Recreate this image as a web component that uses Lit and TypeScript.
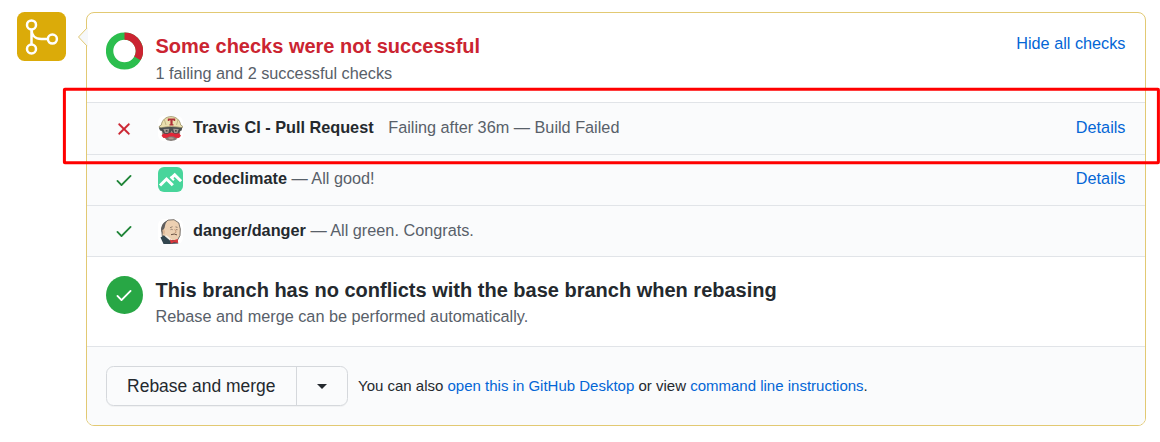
import { LitElement, html, css, svg } from "lit";
import { customElement } from "lit/decorators.js";

const check = svg`<path fill="currentColor" fill-rule="evenodd" d="M13.78 4.22a.75.75 0 010 1.06l-7.25 7.25a.75.75 0 01-1.06 0L2.22 9.28a.75.75 0 011.06-1.06L6 10.94l6.72-6.72a.75.75 0 011.06 0z"/>`;
const cross = svg`<path fill="currentColor" stroke="currentColor" stroke-width=".2" fill-rule="evenodd" d="M3.72 3.72a.75.75 0 011.06 0L8 6.94l3.22-3.22a.75.75 0 111.06 1.06L9.06 8l3.22 3.22a.75.75 0 11-1.06 1.06L8 9.06l-3.22 3.22a.75.75 0 01-1.06-1.06L6.94 8 3.72 4.78a.75.75 0 010-1.06z"/>`;

const travis = svg`
  <rect width="25" height="25" rx="6" fill="#fff"/>
  <path d="M3.500 11h19l-.5 8-4 5H8.500L4 19z" fill="#a3978d"/>
  <path d="M6 20h14l-3 4.300-4 .7-4-.7z" fill="#827a75"/>
  <path d="M3.300 9C4 4 8 .6 13 .6S22 4 22.700 9l2 1.300-.7 1.700c-7-2-14-2-21 0l-2-.9.500-1z" fill="#eadfae" stroke="#8d8258" stroke-width=".7"/>
  <path d="M6.500 4l1.500 5M20 4l-1.500 5" stroke="#b5a978" stroke-width=".8"/>
  <path d="M9.800 2.600h7.400v2.400h-1.500v-.8h-1.100v4.100h.9v1.100h-4V8.300h.9V4.200h-1.100v.8H9.800z" fill="#ad3038"/>
  <path d="M.8 11.500l3 .3c6-1.200 12.500-1.200 18.500 0l2-.2-.7 2.800-1.500.6-1.600 3h-4.800L13.500 14.500 12 18H6l-2-3-2-.6z" fill="#4a4e4e"/>
  <path d="M5.300 13l6-.2-1 4.200H7zM15.200 12.800l5.600.2-1.400 3.900h-3.200z" fill="#a39b94"/>
  <path d="M7.800 14.200h1.700v1.200H7.800zM17 14.200h1.700v1.200H17z" fill="#353535"/>
  <path d="M12.500 16.800h2l2.500.9 4-.4 2 2.400-2 2.300-3.500-.2-2-1.300h-4l-2.500 1.300-3.500.2-2-2.200 2-2.300 3.500.5z" fill="#e02739"/>
  <path d="M10 21.800l3-.6 3 .8-1.200 1.300h-3.600z" fill="#b39b91"/>`;

const climate = svg`
  <rect width="25" height="25" rx="6" fill="#48d59b"/>
  <path d="M2 18.500L8.500 12l6.300 6.300M13.200 11.100l3.500-3.200 6.400 6.400" fill="none" stroke="#fff" stroke-width="3"/>
  <path d="M13.200 9l3.500 3.500-1.500 1.500-3.500-3.500z" fill="#fff"/>`;

const jenkins = svg`
  <rect width="25" height="25" rx="6" fill="#fff"/>
  <path d="M4.300 17L3.500 10 5.500 5l4.500-3.900 6-.4 4.800 3.200 1.500 6.100-.3 6.500-3 5.500-6.500.8z" fill="#edd0b2" stroke="#55504c" stroke-width=".8"/>
  <path d="M3.600 12.500C2.300 8 4.300 3.500 9.300 1.400L7.500 4.800 6.500 9l-1 1.500.4 4.500-1.300-.3z" fill="#615f5e"/>
  <path d="M4.300 11l1.900-.5.800 2.300-.5 2.700-1.500-.5z" fill="#dfb895"/>
  <path d="M2.500 18.500l3.300-2.200 6 4.700 5.700.2 3 3.300-9 .5H5.500z" fill="#33464f"/>
  <path d="M7 17l1.500-.7 5.700 4.700-1.700 1z" fill="#f4f0e8"/>
  <path d="M11.800 20.400l3.200 1.100 4.700-1.500.5 4-4.200-.7-3.200 1.400z" fill="#d8373c"/>
  <path d="M12 8.800l2.500-1.100M17.500 7.900l2 .5M12.500 10.700q1.200-.8 2.200 0M18 10.700h1.500" fill="none" stroke="#7b6a5d" stroke-width=".8"/>
  <path d="M16.700 10l1.500 3.200-1.500.7" fill="none" stroke="#bc9170" stroke-width=".8"/>
  <path d="M13 15.700q3.500-1.500 6 .2" fill="none" stroke="#695143"/>`;

@customElement("app-root")
export class AppRoot extends LitElement {
  static styles = css`
    :host {
      display: block;
      position: relative;
      box-sizing: border-box;
      width: 1160px;
      height: 442px;
      padding: 12px 14px 0 17px;
      background: #fff;
      color: #24292e;
      font: 16.25px/24px "Liberation Sans", Arial, sans-serif;
      overflow: hidden;
    }
    svg { display: block; flex: none; }
    .layout { display: flex; align-items: flex-start; gap: 20px; }
    .panel {
      position: relative;
      flex: 1;
      box-sizing: border-box;
      height: 414px;
      border: 1px solid #e2c973;
      border-radius: 8px;
    }
    .pointer { position: absolute; left: -10px; top: 14px; }
    .inner { border-radius: 7px; overflow: hidden; }
    .section { display: flex; box-sizing: border-box; padding: 0 19.500px 0 19px; }
    .summary { height: 89px; padding-top: 19px; }
    .branch { height: 90px; padding-top: 19px; border-top: 1px solid #e1e4e8; }
    .copy { flex: 1; margin-left: 12.500px; }
    .title { font-size: 20px; line-height: 28px; font-weight: 700; }
    .bad { color: #cb2431; }
    .muted { color: #586069; }
    .sub { line-height: 26px; }
    .branch .sub { line-height: 24px; }
    .summary .link { line-height: 22px; }
    .link { color: #0366d6; }
    .row {
      display: flex;
      align-items: center;
      box-sizing: border-box;
      height: 51px;
      padding: 0 19.500px 2px 27px;
      border-top: 1px solid #e1e4e8;
      background: #fafbfc;
    }
    .row.first { height: 52px; }
    .row .avatar { margin: 2px 10px 0 24px; }
    .row.raised .avatar { margin-top: 0; }
    .row .state { margin-top: 2px; }
    .row .label { flex: 1; white-space: pre; }
    .row .label, .row .link { margin-bottom: 1px; }
    .row.raised .label, .row.raised .link { margin-bottom: 3px; }
    .name { font-weight: 700; color: #24292e; }
    .gap { margin-left: 14.600px; }
    .ok { color: #22863a; }
    .circle {
      display: grid;
      place-items: center;
      box-sizing: border-box;
      width: 37px;
      height: 38px;
      padding-right: 1px;
      border-radius: 50%;
      background: #28a745;
      color: #fff;
    }
    .actions {
      display: flex;
      align-items: center;
      box-sizing: border-box;
      height: 79px;
      padding: 0 19px;
      border-top: 1px solid #e1e4e8;
      background: #fafbfc;
      font-size: 15px;
    }
    .buttons {
      display: flex;
      box-sizing: border-box;
      width: 242px;
      height: 40px;
      margin-right: 10px;
      border: 1px solid #d5d8dc;
      border-radius: 7.500px;
      box-shadow: 0 1px 0 rgba(27, 31, 35, 0.04);
    }
    .button { display: grid; place-items: center; font-size: 17.450px; flex: 1; }
    .main { padding-right: 0.5px; }
    .caret { flex: none; width: 50px; border-left: 1px solid #d5d8dc; }
    .marker {
      position: absolute;
      left: 62px;
      top: 87px;
      width: 1098px;
      height: 78px;
    }
  `;

  private row(
    state: unknown, avatar: unknown, name: string, text: unknown,
    good: boolean, details: boolean, variant = ""
  ) {
    return html`<div class="row ${variant}">
      <svg class="state ${good ? "ok" : "bad"}" width="20" height="20" viewBox="0 0 16 16">${state}</svg>
      <svg class="avatar" width="25" height="25" viewBox="0 0 25 25">${avatar}</svg>
      <div class="label muted"><span class="name">${name}</span>${text}</div>
      ${details ? html`<span class="link">Details</span>` : ""}
    </div>`;
  }

  render() {
    return html`
      <div class="layout">
        <svg width="49" height="49" viewBox="0 0 49 49">
          <rect width="49" height="49" rx="7.500" fill="#dbab09"/>
          <g fill="none" stroke="#fff" stroke-width="2.500">
            <circle cx="14.500" cy="12.900" r="4.500"/>
            <circle cx="14.500" cy="37" r="4.500"/>
            <circle cx="35.400" cy="27.100" r="4.500"/>
            <path d="M14.500 17.300v15.300M14.500 17.300c0 6 3.900 9.800 9.700 9.800h7"/>
          </g>
        </svg>
        <div class="panel">
          <svg class="pointer" width="11" height="20" viewBox="0 0 11 20">
            <path d="M11 0L1.500 10 11 20z" fill="#f6f8fa"/>
            <path d="M10 1L1.500 10l8.500 9" fill="none" stroke="#e2c973"/>
          </svg>
          <div class="inner">
            <div class="section summary">
              <svg width="37" height="38" viewBox="0 0 37 38">
                <circle cx="18.500" cy="19" r="14.900" fill="none" stroke="#2cbe4e" stroke-width="7.400"/>
                <path d="M18.500 4.100A14.900 14.900 0 0 1 31.400 26.450" fill="none" stroke="#cb2431" stroke-width="7.400"/>
              </svg>
              <div class="copy">
                <div class="title bad">Some checks were not successful</div>
                <div class="sub muted">1 failing and 2 successful checks</div>
              </div>
              <span class="link">Hide all checks</span>
            </div>
            ${this.row(cross, travis, "Travis CI - Pull Request", html`<span class="gap">Failing after 36m — Build Failed</span>`, false, true, "first")}
            ${this.row(check, climate, "codeclimate", " — All good!", true, true, "raised")}
            ${this.row(check, jenkins, "danger/danger", " — All green. Congrats.", true, false)}
            <div class="section branch">
              <div class="circle"><svg width="20" height="20" viewBox="0 0 16 16">${check}</svg></div>
              <div class="copy">
                <div class="title">This branch has no conflicts with the base branch when rebasing</div>
                <div class="sub muted">Rebase and merge can be performed automatically.</div>
              </div>
            </div>
            <div class="actions">
              <div class="buttons">
                <div class="button main">Rebase and merge</div>
                <div class="button caret"><svg width="10" height="5" viewBox="0 0 10 5"><path d="M0 0h10L5 5z" fill="#24292e"/></svg></div>
              </div>
              <div>You can also <span class="link">open this in GitHub Desktop</span> or view <span class="link">command line instructions</span>.</div>
            </div>
          </div>
        </div>
      </div>
      <svg class="marker" width="1098" height="78" viewBox="0 0 1098 78">
        <rect x="2.400" y="2.300" width="1094" height="73.400" rx=".5" fill="none" stroke="#f00" stroke-width="3"/>
      </svg>
    `;
  }
}
